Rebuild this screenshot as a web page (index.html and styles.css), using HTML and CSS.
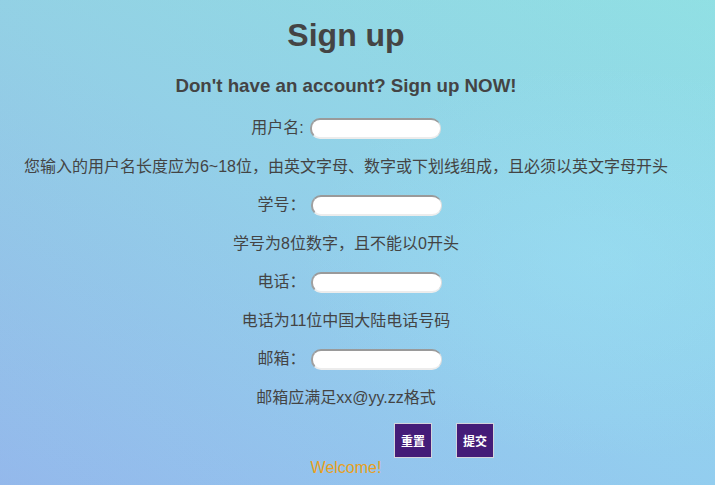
FILE: index.html
```html
<!DOCTYPE html>
<html lang="zh-CN">
<head>
<meta charset="utf-8">
<title>Sign up</title>
<link rel="stylesheet" href="styles.css">
</head>
<body>
<div class="page">
  <h1 class="title">Sign up</h1>
  <h3 class="subtitle">Don't have an account? Sign up NOW!</h3>
  <form class="form">
    <div class="row"><label class="label">用户名:</label><input class="field" type="text"></div>
    <p class="hint">您输入的用户名长度应为6~18位，由英文字母、数字或下划线组成，且必须以英文字母开头</p>
    <div class="row row-shift"><label class="label">学号：</label><input class="field" type="text"></div>
    <p class="hint">学号为8位数字，且不能以0开头</p>
    <div class="row row-shift"><label class="label">电话：</label><input class="field" type="text"></div>
    <p class="hint">电话为11位中国大陆电话号码</p>
    <div class="row row-shift"><label class="label">邮箱：</label><input class="field" type="text"></div>
    <p class="hint">邮箱应满足xx@yy.zz格式</p>
    <div class="footer">
      <div class="actions">
        <button class="btn" type="reset">重置</button>
        <button class="btn" type="button">提交</button>
      </div>
      <p class="welcome">Welcome!</p>
    </div>
  </form>
</div>
</body>
</html>
```
FILE: styles.css
```css
html, body {
  margin: 0;
  height: 100%;
}
body {
  background:
    radial-gradient(ellipse 300px 200px at 600px 260px, rgba(160, 230, 250, 0.35), rgba(160, 230, 250, 0)),
    linear-gradient(to bottom, rgba(150, 215, 205, 0.22), rgba(150, 200, 255, 0.22)),
    linear-gradient(to top right, #93b4e6 0%, #92cfeb 50%, #8fe2ea 100%);
  font-family: "Liberation Sans", "Noto Sans CJK SC", sans-serif;
  color: #444;
  overflow: hidden;
}
.page {
  width: 692px;
  padding-top: 17px;
  text-align: center;
}
.title {
  margin: 0;
  font-size: 32px;
  line-height: 36px;
  font-weight: bold;
  color: #444;
}
.subtitle {
  margin: 21.5px 0 0;
  font-size: 18.72px;
  line-height: 22px;
  font-weight: bold;
  color: #444;
}
.form {
  margin-top: 21.5px;
  display: flex;
  flex-direction: column;
  align-items: center;
  gap: 18.5px;
}
.row {
  display: flex;
  align-items: center;
  height: 20px;
  gap: 6px;
  font-size: 16px;
}
.row-shift {
  margin-left: 7px;
  gap: 5px;
}
.label {
  font-family: "Liberation Sans", "Noto Sans CJK SC", sans-serif;
  line-height: 20px;
}
.field {
  box-sizing: border-box;
  flex: none;
  width: 131px;
  height: 21px;
  margin: 0;
  padding: 0 8px;
  background: #fff;
  border-radius: 10px;
  border-style: solid;
  border-width: 2px 1px 2px 2px;
  border-color: #9a9a9a #dcdcdc #ececec #a0a0a0;
  outline: none;
}
.hint {
  margin: 0;
  height: 20px;
  font-size: 16px;
  line-height: 20px;
  white-space: nowrap;
}
.footer {
  align-self: stretch;
  margin-top: -3px;
}
.actions {
  display: flex;
  gap: 24px;
  padding-left: 394px;
}
.btn {
  box-sizing: border-box;
  width: 38px;
  height: 35px;
  margin: 0;
  padding: 0;
  background: #441c78;
  border: 1px solid #d4d4dc;
  color: #fff;
  font-family: "Noto Sans CJK SC", sans-serif;
  font-size: 12px;
  font-weight: bold;
}
.welcome {
  margin: 1px 0 0;
  font-size: 16px;
  line-height: 18px;
  color: #e8a020;
  text-align: center;
}
```
